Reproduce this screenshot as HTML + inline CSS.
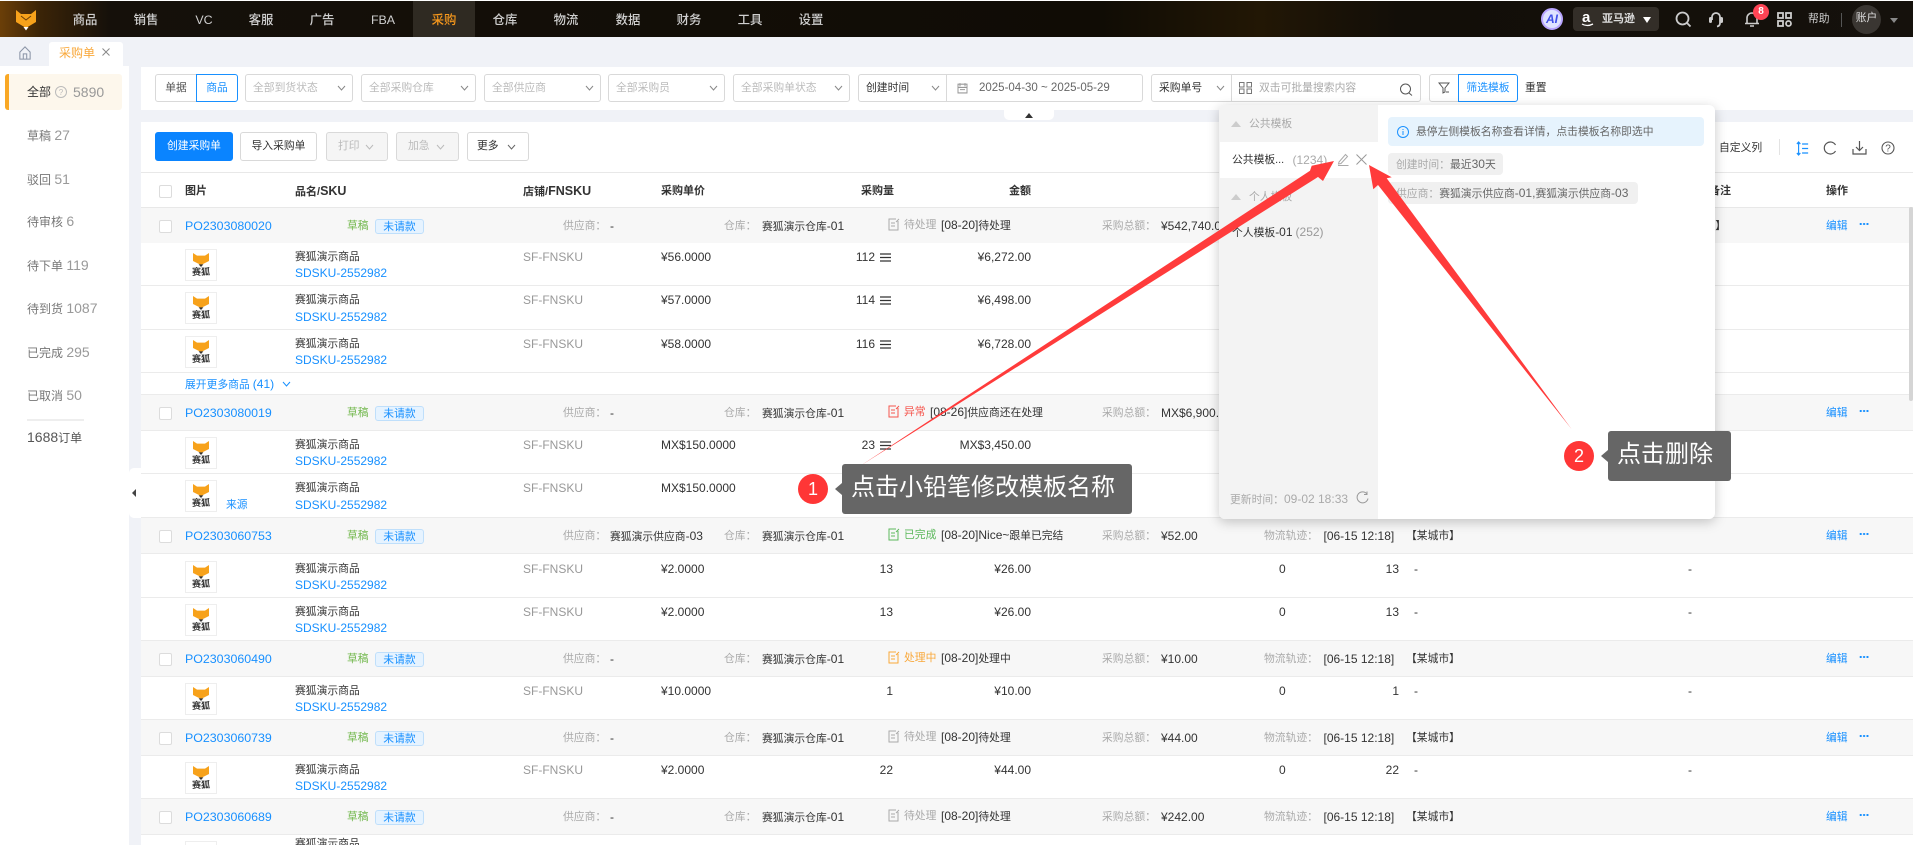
<!DOCTYPE html>
<html lang="zh"><head><meta charset="utf-8"><title>采购单</title>
<style>
*{box-sizing:border-box}
html,body{margin:0;padding:0;width:1913px;height:845px;overflow:hidden;background:#f0f2f7}
body{position:relative;font-family:"Liberation Sans","Noto Sans CJK SC",sans-serif;font-size:10.8px;color:#333}
i{font-style:normal;font-size:12px}
svg{display:block}
.t,.abs{position:absolute;white-space:nowrap}
.t{line-height:16px}
#nav{position:absolute;left:0;top:1px;width:1913px;height:36px;background:linear-gradient(90deg,#6b3f08 0,#3b2407 40px,#15100a 110px,#100c05 1100px,#221705 1260px,#120e08 1400px,#15110c 100%)}
#nav .n{position:absolute;top:0;width:62px;height:36px;line-height:38px;text-align:center;font-size:12.4px;font-weight:500;color:#cfcfcf}
#side{position:absolute;left:0;top:66px;width:129px;height:779px;background:#fff}
#side .t{left:27px;font-size:12px;color:#777}
#side .t i{font-size:14px;color:#999}
.pan{position:absolute;left:141px;background:#fff;width:1772px}
.sel{position:absolute;top:74px;height:28px;background:#fff;border:1px solid #d9d9d9;border-radius:3px;color:#bbb;line-height:26px;padding-left:7px;white-space:nowrap;overflow:hidden}
.sel svg{position:absolute;right:6px;top:10px}
.btn{position:absolute;top:132px;height:29px;border:1px solid #d9d9d9;border-radius:3px;line-height:27px;text-align:center;background:#fff;color:#333}
.r{position:absolute;left:141px;width:1772px;border-bottom:1px solid #ebebeb;background:#fff}
.o{height:36px;background:#f7f7f7}
.p{height:43px}
.r>.t{top:50%;margin-top:-8px}
.cb{position:absolute;left:18px;top:12px;width:13px;height:13px;background:#fff;border:1px solid #dcdcdc;border-radius:2px}
.po{left:44px;color:#1890ff}.po i{font-size:12.4px}
.dr{left:206px;color:#73b84e}
.tag{position:absolute;left:234px;top:11px;width:49px;height:15px;background:#e6f3ff;border:1px solid #bfdffb;border-radius:3px;color:#1890ff;text-align:center;line-height:14px}
.gr{color:#aaa}
.l1{left:422px}.v1{left:469px}.l2{left:583px}.v2{left:621px}
.ic{position:absolute;left:747px;top:10px}
.s1{left:763px;margin-top:-9px!important}
.st{left:800px;margin-top:-9px!important}
.l3{left:961px}.v3{left:1020px}.l4{left:1123px}.v4{left:1182.5px}.v5{left:1265px}
.ed{left:1685px;color:#1890ff}
.dt{position:absolute;left:1718px;top:15px;width:10px;height:2px;background:radial-gradient(circle,#1890ff 1px,transparent 1.1px) 0 0/3.4px 2px}
.img{position:absolute;left:44px;top:6px;width:32px;height:32px;border:1px solid #eee;background:#fff}
.img svg{position:absolute;left:7px;top:3px}
.img b{position:absolute;left:0;top:16px;width:30px;text-align:center;font-size:9px;line-height:12px;color:#333}
.nm,.fn,.pr,.q,.qi,.am,.z,.q2,.d1,.d2{margin-top:-15.5px!important}
.nm{left:154px}
.sk{left:154px;margin-top:1px!important;color:#1890ff}
.fn{left:382px;color:#999}
.pr{left:520px}
.q{right:1020px}
.qi{right:1038px}
.lst{position:absolute;left:739px;top:9.5px}
.am{right:882px}
.z{left:1138px}
.q2{right:514px}
.d1{left:1273px}
.d2{left:1547px}
.hd{top:183px;font-weight:bold;color:#333;font-size:11px}
.hd i{font-size:12.5px}
#pop{position:absolute;left:1219px;top:105px;width:496px;height:414px;background:#fff;border-radius:6px;box-shadow:0 3px 12px rgba(0,0,0,.22);overflow:hidden}
#pop .lf{position:absolute;left:0;top:0;width:159px;height:414px;background:#f3f3f3}
.tri{position:absolute;width:0;height:0;border-left:6px solid transparent;border-right:6px solid transparent;border-bottom:6px solid #ccc}
.call{position:absolute;background:#666;color:#fff;border-radius:3px;font-size:24px;white-space:nowrap}
.num{position:absolute;width:30px;height:30px;border-radius:50%;background:#ff3636;color:#fff;text-align:center;line-height:30px;font-size:18px}
</style></head><body>
<svg width="0" height="0" style="position:absolute"><symbol id="fx" viewBox="0 0 20 21" preserveAspectRatio="none"><path d="M0 0L5 4H15L20 0V12L10 18L0 12Z" fill="#f7a21b"/><path d="M7 17H13L10 21Z" fill="#333"/></symbol></svg>
<div style="position:absolute;left:0;top:0;width:1913px;height:1px;background:#fff"></div>
<div id="nav">
<svg class="abs" style="left:16px;top:9px" width="20" height="21" viewBox="0 0 20 21"><path d="M0 0L5 4H15L20 0V12L10 18L0 12Z" fill="#f7a21b"/><path d="M5 6L10 10L15 6" stroke="#6b3f08" fill="none" stroke-width="1"/><path d="M7.500 17L12.500 17L10 20.500Z" fill="#fff"/></svg>
<span class="n" style="left:54px">商品</span><span class="n" style="left:115px">销售</span><span class="n" style="left:173px">VC</span><span class="n" style="left:230px">客服</span><span class="n" style="left:291px">广告</span><span class="n" style="left:352px">FBA</span>
<span class="n" style="left:413px;background:#2f2a22;color:#f7981c">采购</span>
<span class="n" style="left:474px">仓库</span><span class="n" style="left:535px">物流</span><span class="n" style="left:597px">数据</span><span class="n" style="left:658px">财务</span><span class="n" style="left:719px">工具</span><span class="n" style="left:780px">设置</span>
<div class="abs" style="left:1541px;top:7px;width:22px;height:22px;border-radius:50%;background:#dfe3ff;border:2px solid #b9a6ff;color:#3f4fe8;font:italic bold 12px/18px 'Liberation Sans',sans-serif;text-align:center">AI</div>
<div class="abs" style="left:1573px;top:6px;width:86px;height:24px;background:#332e28;border-radius:4px"></div>
<span class="abs" style="left:1582px;top:9px;color:#fff;font:bold 15px/15px 'Liberation Sans',sans-serif">a</span>
<svg class="abs" style="left:1581px;top:22px" width="13" height="5" viewBox="0 0 13 5"><path d="M1 1Q6 4 12 1" stroke="#fff" fill="none" stroke-width="1.300"/></svg>
<span class="abs" style="left:1602px;top:10px;color:#ddd;font-size:11px;font-weight:bold;line-height:16px">亚马逊</span>
<div class="tri" style="left:1643px;top:16px;border-bottom:0;border-top:6px solid #fff;border-left-width:4px;border-right-width:4px"></div>
<svg class="abs" style="left:1675px;top:10px" width="17" height="17" viewBox="0 0 17 17"><circle cx="7.500" cy="7.500" r="6" stroke="#ccc" stroke-width="1.800" fill="none"/><path d="M12 12L15.500 15.500" stroke="#ccc" stroke-width="1.800"/></svg>
<svg class="abs" style="left:1708px;top:10px" width="16" height="17" viewBox="0 0 16 17"><path d="M4 9V6a4 4 0 0 1 8 0V12Q12 15 9 15.500" stroke="#ccc" stroke-width="1.800" fill="none"/><rect x="1" y="6" width="3" height="6" rx="1.500" fill="#ccc"/><rect x="12" y="6" width="3" height="6" rx="1.500" fill="#ccc"/></svg>
<svg class="abs" style="left:1744px;top:10px" width="16" height="17" viewBox="0 0 16 17"><path d="M3 12V7a5 5 0 0 1 10 0V12M1 12.500H15M6 15H10" stroke="#ccc" stroke-width="1.600" fill="none"/></svg>
<div class="abs" style="left:1753px;top:3px;width:16px;height:16px;border-radius:50%;background:#ff4455;color:#fff;font-size:10px;font-weight:bold;text-align:center;line-height:16px;font-family:'Liberation Sans',sans-serif">8</div>
<svg class="abs" style="left:1777px;top:11px" width="15" height="15" viewBox="0 0 15 15"><g fill="none" stroke="#ccc" stroke-width="1.800"><rect x="1" y="1" width="5" height="5"/><rect x="9" y="1" width="5" height="5"/><rect x="1" y="9" width="5" height="5"/><rect x="9" y="9" width="5" height="5" rx="2.500"/></g></svg>
<span class="abs" style="left:1808px;top:10px;color:#ccc;font-size:10.800px;line-height:16px">帮助</span>
<div class="abs" style="left:1841px;top:12px;width:1px;height:14px;background:#555"></div>
<div class="abs" style="left:1852px;top:4px;width:29px;height:29px;border-radius:50%;background:#3a3632;color:#ddd;text-align:center;line-height:26px;font-size:10.800px">账户</div>
<div class="tri" style="left:1890px;top:17px;border-bottom:0;border-top:5px solid #888;border-left-width:4px;border-right-width:4px"></div>
</div>

<svg class="abs" style="left:19px;top:46px" width="12" height="14" viewBox="0 0 14 16" preserveAspectRatio="none"><path d="M1 7L7 1L13 7V15H1Z M5 15V9H9V15" fill="none" stroke="#8a94a6" stroke-width="1.200"/></svg>
<div class="abs" style="left:49px;top:42px;width:74px;height:24px;background:#fff;border-radius:3px 3px 0 0"></div>
<span class="t" style="left:59px;top:45px;color:#f9a83a;font-size:12px">采购单</span>
<svg class="abs" style="left:102px;top:48px" width="8" height="8" viewBox="0 0 8 8"><path d="M0.500 0.500L7.500 7.500M7.500 0.500L0.500 7.500" stroke="#888"/></svg>

<div id="side">
<div class="abs" style="left:5px;top:8px;width:117px;height:36px;background:#fdf7ec;border-radius:3px;border-left:4px solid #f9a825"></div>
<span class="t" style="top:18px;color:#333!important"><span style="color:#333">全部</span></span>
<svg class="abs" style="left:55px;top:20px" width="12" height="12" viewBox="0 0 12 12"><circle cx="6" cy="6" r="5.500" fill="none" stroke="#bbb"/><text x="6" y="9" font-size="8" text-anchor="middle" fill="#bbb" font-family="Liberation Sans">?</text></svg>
<span class="t" style="left:73px;top:18px"><i>5890</i></span>
<span class="t" style="top:61px">草稿 <i>27</i></span>
<span class="t" style="top:105px">驳回 <i>51</i></span>
<span class="t" style="top:147px">待审核 <i>6</i></span>
<span class="t" style="top:191px">待下单 <i>119</i></span>
<span class="t" style="top:234px">待到货 <i>1087</i></span>
<span class="t" style="top:278px">已完成 <i>295</i></span>
<span class="t" style="top:321px">已取消 <i>50</i></span>
<div class="abs" style="left:27px;top:353px;width:57px;height:2px;background:#eee"></div>
<span class="t" style="top:363px;color:#555"><i style="color:#555">1688</i>订单</span>
</div>
<div class="abs" style="left:129px;top:468px;width:12px;height:50px;background:#fff;border-radius:5px 0 0 5px"></div>
<div class="abs" style="left:132px;top:489px;border-top:4px solid transparent;border-bottom:4px solid transparent;border-right:4px solid #444"></div>

<div class="pan" style="top:67px;height:43px"></div>
<div class="abs" style="left:155px;top:74px;width:42px;height:28px;background:#fff;border:1px solid #d9d9d9;border-radius:3px 0 0 3px;line-height:26px;text-align:center;color:#555">单据</div>
<div class="abs" style="left:196px;top:74px;width:42px;height:28px;background:#fff;border:1px solid #1890ff;border-radius:0 3px 3px 0;line-height:26px;text-align:center;color:#1890ff">商品</div>
<div class="sel" style="left:245px;width:108px">全部到货状态<svg width="9" height="6" viewBox="0 0 9 6"><path d="M1 1L4.500 5L8 1" fill="none" stroke="#888"/></svg></div>
<div class="sel" style="left:361px;width:115px">全部采购仓库<svg width="9" height="6" viewBox="0 0 9 6"><path d="M1 1L4.500 5L8 1" fill="none" stroke="#888"/></svg></div>
<div class="sel" style="left:484px;width:117px">全部供应商<svg width="9" height="6" viewBox="0 0 9 6"><path d="M1 1L4.500 5L8 1" fill="none" stroke="#888"/></svg></div>
<div class="sel" style="left:608px;width:117px">全部采购员<svg width="9" height="6" viewBox="0 0 9 6"><path d="M1 1L4.500 5L8 1" fill="none" stroke="#888"/></svg></div>
<div class="sel" style="left:733px;width:117px">全部采购单状态<svg width="9" height="6" viewBox="0 0 9 6"><path d="M1 1L4.500 5L8 1" fill="none" stroke="#888"/></svg></div>
<div class="sel" style="left:858px;width:89px;color:#333;border-radius:3px 0 0 3px">创建时间<svg width="9" height="6" viewBox="0 0 9 6"><path d="M1 1L4.500 5L8 1" fill="none" stroke="#888"/></svg></div>
<div class="sel" style="left:946px;width:197px;color:#666;border-radius:0 3px 3px 0;padding-left:32px"><i style="font-size:11.500px">2025-04-30 ~ 2025-05-29</i></div>
<svg class="abs" style="left:957px;top:82px" width="11" height="12" viewBox="0 0 11 11" preserveAspectRatio="none"><path d="M1 2H10V10H1ZM1 5H10M3 4V1M8 4V1M3 7H8" fill="none" stroke="#999"/></svg>
<div class="sel" style="left:1151px;width:81px;color:#333;border-radius:3px 0 0 3px">采购单号<svg width="9" height="6" viewBox="0 0 9 6"><path d="M1 1L4.500 5L8 1" fill="none" stroke="#888"/></svg></div>
<div class="sel" style="left:1231px;width:190px;color:#aaa;border-radius:0 3px 3px 0;padding-left:27px">双击可批量搜索内容</div>
<svg class="abs" style="left:1239px;top:82px" width="13" height="12" viewBox="0 0 13 12"><g fill="none" stroke="#777"><rect x="0.500" y="0.500" width="4.500" height="4.500"/><rect x="8" y="0.500" width="4.500" height="4.500"/><rect x="0.500" y="7" width="4.500" height="4.500"/><rect x="8" y="7" width="4.500" height="4.500"/></g></svg>
<svg class="abs" style="left:1399px;top:83px" width="14" height="13" viewBox="0 0 14 13"><circle cx="6.500" cy="6" r="5" fill="none" stroke="#555"/><path d="M10 10L13 12.500" stroke="#555"/></svg>
<div class="abs" style="left:1429px;top:74px;width:30px;height:28px;background:#fff;border:1px solid #d9d9d9;border-radius:3px 0 0 3px"></div>
<svg class="abs" style="left:1438px;top:82px" width="12" height="12" viewBox="0 0 12 12"><path d="M1 1H11L7 6V10L5 11V6Z" fill="none" stroke="#555"/><path d="M8 10H11" stroke="#555"/></svg>
<div class="abs" style="left:1458px;top:74px;width:60px;height:28px;background:#fff;border:1px solid #1890ff;border-radius:0 3px 3px 0;line-height:26px;text-align:center;color:#1890ff">筛选模板</div>
<span class="t" style="left:1525px;top:80px;color:#333">重置</span>
<div class="abs" style="left:1004px;top:110px;width:50px;height:10px;background:#fff;border-radius:0 0 5px 5px"></div>
<div class="tri" style="left:1025px;top:113px;border-left-width:4px;border-right-width:4px;border-bottom:5px solid #333"></div>

<div class="pan" style="top:122px;height:723px"></div>
<div class="btn" style="left:155px;width:78px;background:#0a84ff;border-color:#0a84ff;color:#fff">创建采购单</div>
<div class="btn" style="left:240px;width:77px">导入采购单</div>
<div class="btn" style="left:326px;width:62px;background:#f5f5f5;color:#bbb;text-align:left;padding-left:11px">打印<svg class="abs" style="right:13px;top:11px" width="9" height="6" viewBox="0 0 9 6"><path d="M1 1L4.500 5L8 1" fill="none" stroke="#bbb"/></svg></div>
<div class="btn" style="left:396px;width:63px;background:#f5f5f5;color:#bbb;text-align:left;padding-left:11px">加急<svg class="abs" style="right:13px;top:11px" width="9" height="6" viewBox="0 0 9 6"><path d="M1 1L4.500 5L8 1" fill="none" stroke="#bbb"/></svg></div>
<div class="btn" style="left:467px;width:62px;text-align:left;padding-left:9px">更多<svg class="abs" style="right:12px;top:11px" width="9" height="6" viewBox="0 0 9 6"><path d="M1 1L4.500 5L8 1" fill="none" stroke="#666"/></svg></div>
<span class="t" style="left:1719px;top:140px">自定义列</span>
<div class="abs" style="left:1779px;top:139px;width:1px;height:16px;background:#e3e3e3"></div>
<svg class="abs" style="left:1796px;top:141px" width="13" height="15" viewBox="0 0 15 15" preserveAspectRatio="none"><path d="M3 1V14M1 3L3 1L5 3M1 12L3 14L5 12M7 3H14M7 7.500H14M7 12H14" fill="none" stroke="#1890ff" stroke-width="1.300"/></svg>
<svg class="abs" style="left:1823px;top:141px" width="14" height="14" viewBox="0 0 14 14"><path d="M12.500 4A6 6 0 1 0 12.500 10" fill="none" stroke="#555" stroke-width="1.200"/></svg>
<svg class="abs" style="left:1852px;top:140px" width="15" height="15" viewBox="0 0 15 15"><path d="M7.500 1V10M4 7L7.500 10.500L11 7M1 9V14H14V9" fill="none" stroke="#555" stroke-width="1.200"/></svg>
<svg class="abs" style="left:1881px;top:141px" width="14" height="14" viewBox="0 0 14 14"><circle cx="7" cy="7" r="6" fill="none" stroke="#555" stroke-width="1.100"/><text x="7" y="10.500" font-size="10" text-anchor="middle" fill="#555" font-family="Liberation Sans">?</text></svg>

<div class="abs" style="left:141px;top:172px;width:1772px;height:1px;background:#e8e8e8"></div>
<div class="abs" style="left:141px;top:207px;width:1772px;height:1px;background:#e8e8e8"></div>
<div class="abs" style="left:159px;top:185px;width:13px;height:13px;background:#fff;border:1px solid #dcdcdc;border-radius:2px"></div>
<span class="t hd" style="left:185px">图片</span><span class="t hd" style="left:295px">品名/<i>SKU</i></span><span class="t hd" style="left:523px">店铺/<i>FNSKU</i></span><span class="t hd" style="left:661px">采购单价</span><span class="t hd" style="left:861px">采购量</span><span class="t hd" style="left:1009px">金额</span><span class="t hd" style="left:1709px">备注</span><span class="t hd" style="left:1826px">操作</span>

<!-- order 1 -->
<div class="r o" style="top:208px"><b class="cb"></b><span class="t po"><i>PO2303080020</i></span><span class="t dr">草稿</span><span class="tag">未请款</span><span class="t l1 gr">供应商：</span><span class="t v1"><i>-</i></span><span class="t l2 gr">仓库：</span><span class="t v2">赛狐演示仓库<i>-01</i></span><svg class="ic" width="12" height="13" viewBox="0 0 12 13"><path d="M10 3V12H1V1H8M3 5H7M3 8H7M8 4L11 1" fill="none" stroke="#aaa"/></svg><span class="t s1 gr">待处理</span><span class="t st"><i>[08-20]</i>待处理</span><span class="t l3 gr">采购总额：</span><span class="t v3"><i>¥542,740.00</i></span><span class="t" style="right:187px;margin-top:-8px">【某城市】</span><span class="t ed">编辑</span><span class="dt"></span></div>
<div class="r p" style="top:243px"><div class="img"><svg width="16" height="14"><use href="#fx"/></svg><b>赛狐</b></div><span class="t nm">赛狐演示商品</span><span class="t sk"><i>SDSKU-2552982</i></span><span class="t fn"><i>SF-FNSKU</i></span><span class="t pr"><i>¥56.0000</i></span><span class="t qi"><i>112</i></span><svg class="lst" width="11" height="9" viewBox="0 0 11 9"><path d="M0 1H11M0 4.500H11M0 8H11" stroke="#333" stroke-width="1.200"/></svg><span class="t am"><i>¥6,272.00</i></span></div>
<div class="r p" style="top:286px;height:44px"><div class="img"><svg width="16" height="14"><use href="#fx"/></svg><b>赛狐</b></div><span class="t nm">赛狐演示商品</span><span class="t sk"><i>SDSKU-2552982</i></span><span class="t fn"><i>SF-FNSKU</i></span><span class="t pr"><i>¥57.0000</i></span><span class="t qi"><i>114</i></span><svg class="lst" width="11" height="9" viewBox="0 0 11 9"><path d="M0 1H11M0 4.500H11M0 8H11" stroke="#333" stroke-width="1.200"/></svg><span class="t am"><i>¥6,498.00</i></span></div>
<div class="r p" style="top:330px"><div class="img"><svg width="16" height="14"><use href="#fx"/></svg><b>赛狐</b></div><span class="t nm">赛狐演示商品</span><span class="t sk"><i>SDSKU-2552982</i></span><span class="t fn"><i>SF-FNSKU</i></span><span class="t pr"><i>¥58.0000</i></span><span class="t qi"><i>116</i></span><svg class="lst" width="11" height="9" viewBox="0 0 11 9"><path d="M0 1H11M0 4.500H11M0 8H11" stroke="#333" stroke-width="1.200"/></svg><span class="t am"><i>¥6,728.00</i></span></div>
<div class="r" style="top:373px;height:22px"><span class="t" style="left:44px;color:#1890ff">展开更多商品 <i>(41)</i></span><svg class="abs" style="left:141px;top:8px" width="9" height="6" viewBox="0 0 9 6"><path d="M1 1L4.500 5L8 1" fill="none" stroke="#1890ff"/></svg></div>
<!-- order 2 -->
<div class="r o" style="top:395px"><b class="cb"></b><span class="t po"><i>PO2303080019</i></span><span class="t dr">草稿</span><span class="tag">未请款</span><span class="t l1 gr">供应商：</span><span class="t v1"><i>-</i></span><span class="t l2 gr">仓库：</span><span class="t v2">赛狐演示仓库<i>-01</i></span><svg class="ic" width="12" height="13" viewBox="0 0 12 13"><path d="M10 3V12H1V1H8M3 5H7M3 8H7M8 4L11 1" fill="none" stroke="#f5564e"/></svg><span class="t s1" style="color:#f5564e">异常</span><span class="t st" style="left:789px"><i>[08-26]</i>供应商还在处理</span><span class="t l3 gr">采购总额：</span><span class="t v3"><i>MX$6,900.00</i></span><span class="t ed">编辑</span><span class="dt"></span></div>
<div class="r p" style="top:431px"><div class="img"><svg width="16" height="14"><use href="#fx"/></svg><b>赛狐</b></div><span class="t nm">赛狐演示商品</span><span class="t sk"><i>SDSKU-2552982</i></span><span class="t fn"><i>SF-FNSKU</i></span><span class="t pr"><i>MX$150.0000</i></span><span class="t qi"><i>23</i></span><svg class="lst" width="11" height="9" viewBox="0 0 11 9"><path d="M0 1H11M0 4.500H11M0 8H11" stroke="#333" stroke-width="1.200"/></svg><span class="t am"><i>MX$3,450.00</i></span></div>
<div class="r p" style="top:474px;height:44px"><div class="img"><svg width="16" height="14"><use href="#fx"/></svg><b>赛狐</b></div><span class="t" style="left:85px;margin-top:1px;color:#1890ff">来源</span><span class="t nm">赛狐演示商品</span><span class="t sk"><i>SDSKU-2552982</i></span><span class="t fn"><i>SF-FNSKU</i></span><span class="t pr"><i>MX$150.0000</i></span></div>
<!-- order 3 -->
<div class="r o" style="top:518px"><b class="cb"></b><span class="t po"><i>PO2303060753</i></span><span class="t dr">草稿</span><span class="tag">未请款</span><span class="t l1 gr">供应商：</span><span class="t" style="left:469px">赛狐演示供应商<i>-03</i></span><span class="t l2 gr">仓库：</span><span class="t v2">赛狐演示仓库<i>-01</i></span><svg class="ic" width="12" height="13" viewBox="0 0 12 13"><path d="M10 3V12H1V1H8M3 5H7M3 8H7M8 4L11 1" fill="none" stroke="#5cb85c"/></svg><span class="t s1" style="color:#5cb85c">已完成</span><span class="t st"><i>[08-20]Nice~</i>跟单已完结</span><span class="t l3 gr">采购总额：</span><span class="t v3"><i>¥52.00</i></span><span class="t l4 gr">物流轨迹：</span><span class="t v4"><i>[06-15 12:18]</i></span><span class="t v5">【某城市】</span><span class="t ed">编辑</span><span class="dt"></span></div>
<div class="r p" style="top:555px"><div class="img"><svg width="16" height="14"><use href="#fx"/></svg><b>赛狐</b></div><span class="t nm">赛狐演示商品</span><span class="t sk"><i>SDSKU-2552982</i></span><span class="t fn"><i>SF-FNSKU</i></span><span class="t pr"><i>¥2.0000</i></span><span class="t q"><i>13</i></span><span class="t am"><i>¥26.00</i></span><span class="t z"><i>0</i></span><span class="t q2"><i>13</i></span><span class="t d1"><i>-</i></span><span class="t d2"><i>-</i></span></div>
<div class="r p" style="top:598px"><div class="img"><svg width="16" height="14"><use href="#fx"/></svg><b>赛狐</b></div><span class="t nm">赛狐演示商品</span><span class="t sk"><i>SDSKU-2552982</i></span><span class="t fn"><i>SF-FNSKU</i></span><span class="t pr"><i>¥2.0000</i></span><span class="t q"><i>13</i></span><span class="t am"><i>¥26.00</i></span><span class="t z"><i>0</i></span><span class="t q2"><i>13</i></span><span class="t d1"><i>-</i></span><span class="t d2"><i>-</i></span></div>
<!-- order 4 -->
<div class="r o" style="top:641px"><b class="cb"></b><span class="t po"><i>PO2303060490</i></span><span class="t dr">草稿</span><span class="tag">未请款</span><span class="t l1 gr">供应商：</span><span class="t v1"><i>-</i></span><span class="t l2 gr">仓库：</span><span class="t v2">赛狐演示仓库<i>-01</i></span><svg class="ic" width="12" height="13" viewBox="0 0 12 13"><path d="M10 3V12H1V1H8M3 5H7M3 8H7M8 4L11 1" fill="none" stroke="#f9a83a"/></svg><span class="t s1" style="color:#f9a83a">处理中</span><span class="t st"><i>[08-20]</i>处理中</span><span class="t l3 gr">采购总额：</span><span class="t v3"><i>¥10.00</i></span><span class="t l4 gr">物流轨迹：</span><span class="t v4"><i>[06-15 12:18]</i></span><span class="t v5">【某城市】</span><span class="t ed">编辑</span><span class="dt"></span></div>
<div class="r p" style="top:677px"><div class="img"><svg width="16" height="14"><use href="#fx"/></svg><b>赛狐</b></div><span class="t nm">赛狐演示商品</span><span class="t sk"><i>SDSKU-2552982</i></span><span class="t fn"><i>SF-FNSKU</i></span><span class="t pr"><i>¥10.0000</i></span><span class="t q"><i>1</i></span><span class="t am"><i>¥10.00</i></span><span class="t z"><i>0</i></span><span class="t q2"><i>1</i></span><span class="t d1"><i>-</i></span><span class="t d2"><i>-</i></span></div>
<!-- order 5 -->
<div class="r o" style="top:720px"><b class="cb"></b><span class="t po"><i>PO2303060739</i></span><span class="t dr">草稿</span><span class="tag">未请款</span><span class="t l1 gr">供应商：</span><span class="t v1"><i>-</i></span><span class="t l2 gr">仓库：</span><span class="t v2">赛狐演示仓库<i>-01</i></span><svg class="ic" width="12" height="13" viewBox="0 0 12 13"><path d="M10 3V12H1V1H8M3 5H7M3 8H7M8 4L11 1" fill="none" stroke="#aaa"/></svg><span class="t s1 gr">待处理</span><span class="t st"><i>[08-20]</i>待处理</span><span class="t l3 gr">采购总额：</span><span class="t v3"><i>¥44.00</i></span><span class="t l4 gr">物流轨迹：</span><span class="t v4"><i>[06-15 12:18]</i></span><span class="t v5">【某城市】</span><span class="t ed">编辑</span><span class="dt"></span></div>
<div class="r p" style="top:756px"><div class="img"><svg width="16" height="14"><use href="#fx"/></svg><b>赛狐</b></div><span class="t nm">赛狐演示商品</span><span class="t sk"><i>SDSKU-2552982</i></span><span class="t fn"><i>SF-FNSKU</i></span><span class="t pr"><i>¥2.0000</i></span><span class="t q"><i>22</i></span><span class="t am"><i>¥44.00</i></span><span class="t z"><i>0</i></span><span class="t q2"><i>22</i></span><span class="t d1"><i>-</i></span><span class="t d2"><i>-</i></span></div>
<!-- order 6 -->
<div class="r o" style="top:799px"><b class="cb"></b><span class="t po"><i>PO2303060689</i></span><span class="t dr">草稿</span><span class="tag">未请款</span><span class="t l1 gr">供应商：</span><span class="t v1"><i>-</i></span><span class="t l2 gr">仓库：</span><span class="t v2">赛狐演示仓库<i>-01</i></span><svg class="ic" width="12" height="13" viewBox="0 0 12 13"><path d="M10 3V12H1V1H8M3 5H7M3 8H7M8 4L11 1" fill="none" stroke="#aaa"/></svg><span class="t s1 gr">待处理</span><span class="t st"><i>[08-20]</i>待处理</span><span class="t l3 gr">采购总额：</span><span class="t v3"><i>¥242.00</i></span><span class="t l4 gr">物流轨迹：</span><span class="t v4"><i>[06-15 12:18]</i></span><span class="t v5">【某城市】</span><span class="t ed">编辑</span><span class="dt"></span></div>
<div class="abs" style="left:141px;top:835px;width:1772px;height:10px;overflow:hidden"><span class="t" style="left:154px;top:1px">赛狐演示商品</span><div class="abs" style="left:44px;top:6px;width:32px;height:6px;border:1px solid #eee"></div></div>

<div class="abs" style="left:1909px;top:207px;width:4px;height:194px;background:#d5d5d5;border-radius:2px"></div>

<div id="pop">
<div class="lf"></div>
<div class="tri" style="left:12px;top:16px;border-left-width:5.500px;border-right-width:5.500px;border-bottom:6px solid #ccc"></div>
<span class="t" style="left:30px;top:11px;color:#aaa">公共模板</span>
<div class="abs" style="left:1px;top:37px;width:158px;height:36px;background:#fff"></div>
<span class="t" style="left:13px;top:47px;color:#333">公共模板...</span>
<span class="t gr" style="left:73.500px;top:47px"><i>(1234)</i></span>
<svg class="abs" style="left:118px;top:48px" width="12" height="13" viewBox="0 0 12 13"><path d="M2 9L8.500 1.500L10.500 3.500L4 10.500L1.500 11ZM1 12.500H11.500" fill="none" stroke="#aaa"/></svg>
<svg class="abs" style="left:137px;top:49px" width="11" height="11" viewBox="0 0 11 11"><path d="M0.500 0.500L10.500 10.500M10.500 0.500L0.500 10.500" stroke="#999"/></svg>
<div class="tri" style="left:12px;top:89px;border-left-width:5.500px;border-right-width:5.500px;border-bottom:6px solid #ccc"></div>
<span class="t" style="left:30px;top:84px;color:#aaa">个人模板</span>
<span class="t" style="left:13px;top:119px;color:#333">个人模板<i>-01</i> <i style="color:#999">(252)</i></span>
<span class="t" style="left:11px;top:386px;color:#aaa;font-size:10.800px">更新时间：<i>09-02 18:33</i></span>
<svg class="abs" style="left:137px;top:386px" width="13" height="13" viewBox="0 0 13 13"><path d="M11 3A5.500 5.500 0 1 0 12 7.500M11 0.500V3.500H8" fill="none" stroke="#999"/></svg>
<div class="abs" style="left:169px;top:12px;width:316px;height:29px;background:#e6f3fd;border-radius:4px"></div>
<svg class="abs" style="left:178px;top:21px" width="12" height="12" viewBox="0 0 12 12"><circle cx="6" cy="6" r="5.500" fill="none" stroke="#1890ff"/><path d="M6 3V4M6 5V9" stroke="#1890ff"/></svg>
<span class="t" style="left:197px;top:19px;color:#666">悬停左侧模板名称查看详情，点击模板名称即选中</span>
<div class="abs" style="left:169px;top:48px;width:115px;height:22px;background:#f0f0f0;border-radius:4px"></div>
<span class="t" style="left:177px;top:51px;color:#aaa">创建时间：<span style="color:#666">最近<i>30</i>天</span></span>
<div class="abs" style="left:169px;top:77px;width:250px;height:22px;background:#f0f0f0;border-radius:4px"></div>
<span class="t" style="left:177px;top:80px;color:#aaa">供应商：<span style="color:#666">赛狐演示供应商<i>-01,</i>赛狐演示供应商<i>-03</i></span></span>
</div>

<svg class="abs" style="left:0;top:0" width="1913" height="845" viewBox="0 0 1913 845">
<polygon points="860,466 1310,170.700 1311.700,165.700 1334,161 1323,181 1318,177" fill="#ff3b3b"/>
<polygon points="1571.500,429 1378,185 1373.300,189.300 1369,165 1391.700,177.300 1386.700,178.300" fill="#ff3b3b"/>
</svg>

<div class="num" style="left:798px;top:474px">1</div>
<div class="abs" style="left:835px;top:483px;border-top:6px solid transparent;border-bottom:6px solid transparent;border-right:7px solid #666"></div>
<div class="call" style="left:842px;top:464px;width:290px;height:50px;line-height:48px;padding-left:9px">点击小铅笔修改模板名称</div>
<div class="num" style="left:1564px;top:441px">2</div>
<div class="abs" style="left:1601px;top:450px;border-top:6px solid transparent;border-bottom:6px solid transparent;border-right:7px solid #666"></div>
<div class="call" style="left:1608px;top:431px;width:123px;height:50px;line-height:48px;padding-left:9px">点击删除</div>
</body></html>
